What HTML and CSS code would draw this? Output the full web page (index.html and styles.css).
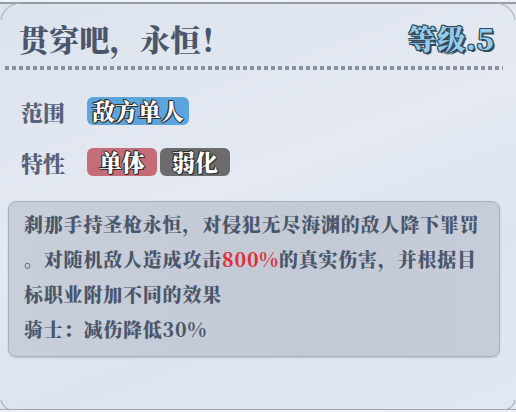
FILE: index.html
```html
<!doctype html>
<html lang="zh-CN">
    <head>
        <meta charset="UTF-8" />
        <title>技能详情</title>
        <link rel="stylesheet" href="styles.css">
    </head>

    <body>
        <div class="panel">
            <svg class="corner corner-tl" width="24" height="24" viewBox="0 0 24 24">
                <path d="M1 20 C2 12 7 6 18 3" fill="none" stroke="#b0b6bf" stroke-width="1.2" />
                <path d="M4 11 C6 8 9 6 13 4" fill="none" stroke="#c8cdd4" stroke-width="1" />
            </svg>
            <svg class="corner corner-tr" width="24" height="24" viewBox="0 0 24 24">
                <path d="M23 20 C22 12 17 6 6 3" fill="none" stroke="#b0b6bf" stroke-width="1.2" />
                <path d="M20 11 C18 8 15 6 11 4" fill="none" stroke="#c8cdd4" stroke-width="1" />
            </svg>
            <svg class="corner corner-bl" width="16" height="16" viewBox="0 0 16 16">
                <path d="M1 4 C2 9 5 12 10 14" fill="none" stroke="#a9afb9" stroke-width="1.2" />
            </svg>
            <svg class="corner corner-br" width="16" height="16" viewBox="0 0 16 16">
                <path d="M15 4 C14 9 11 12 6 14" fill="none" stroke="#a9afb9" stroke-width="1.2" />
            </svg>

            <div class="header">
                <h1 class="skill-name">贯穿吧，永恒！</h1>
                <div class="skill-level">等级.5</div>
            </div>
            <div class="dots"></div>

            <div class="attrs">
                <div class="attr-row">
                    <span class="attr-label">范围</span>
                    <span class="tag tag-blue">敌方单人</span>
                </div>
                <div class="attr-row">
                    <span class="attr-label">特性</span>
                    <span class="tag tag-red">单体</span>
                    <span class="tag tag-gray">弱化</span>
                </div>
            </div>

            <div class="desc">
                <p>刹那手持圣枪永恒，对侵犯无尽海渊的敌人降下罪罚</p>
                <p>。对随机敌人造成攻击<span class="hl">800%</span>的真实伤害，并根据目</p>
                <p>标职业附加不同的效果</p>
                <p>骑士：减伤降低30%</p>
            </div>
        </div>
    </body>
</html>
```

FILE: styles.css
```css
* {
    box-sizing: border-box;
    margin: 0;
    padding: 0;
}

body {
    width: 516px;
    height: 412px;
    background: #dfe5ee;
    font-family: "Noto Serif CJK SC", "Noto Sans CJK SC", serif;
    color: #4a566a;
    overflow: hidden;
}

.panel {
    position: relative;
    width: 516px;
    height: 412px;
    padding-top: 22px;
    background: linear-gradient(160deg, #dde3ed 0%, #e4e9f2 45%, #dde4ee 70%, #e2e8f1 100%);
    box-shadow:
        inset 0 2px 0 #eef1f6,
        inset 0 4px 0 #959ca7,
        inset 0 -2px 0 #eef1f6,
        inset 0 -3px 0 #a0a6b0;
}

.corner {
    position: absolute;
}

.corner-tl {
    top: 0;
    left: 0;
}

.corner-tr {
    top: 0;
    right: 0;
}

.corner-bl {
    bottom: 0;
    left: 0;
}

.corner-br {
    bottom: 0;
    right: 0;
}

.header {
    display: flex;
    justify-content: space-between;
    align-items: center;
    height: 32px;
    padding: 0 21px 0 19px;
}

.skill-name {
    font-size: 30px;
    font-weight: 900;
    line-height: 32px;
    letter-spacing: 0.3px;
}

.skill-level {
    font-size: 28px;
    font-weight: 900;
    line-height: 32px;
    letter-spacing: 1px;
    color: #93cdee;
    text-shadow:
        1px 0 0 #34495a,
        -1px 0 0 #34495a,
        0 1px 0 #34495a,
        0 -1px 0 #34495a,
        1px 1px 0 #34495a,
        -1px -1px 0 #34495a,
        1px -1px 0 #34495a,
        -1px 1px 0 #34495a,
        2px 2px 0 #34495a;
}

.dots {
    height: 4px;
    margin: 12px 13px 0 5px;
    background: repeating-linear-gradient(90deg, #8b919c 0 4px, transparent 4px 7px);
}

.attrs {
    display: flex;
    flex-direction: column;
    gap: 23px;
    margin-top: 27px;
    padding-left: 21px;
}

.attr-row {
    display: flex;
    align-items: center;
    gap: 3px;
    height: 28px;
}

.attr-label {
    width: 63px;
    font-size: 22px;
    font-weight: 900;
    color: #56627a;
}

.tag {
    height: 28px;
    border-radius: 6px;
    font-size: 23px;
    font-weight: 900;
    line-height: 28px;
    color: #ffffff;
    text-shadow:
        1px 0 0 #2d2d2d,
        -1px 0 0 #2d2d2d,
        0 1px 0 #2d2d2d,
        0 -1px 0 #2d2d2d,
        1px 1px 0 #2d2d2d,
        -1px -1px 0 #2d2d2d;
}

.tag-blue {
    background: #5ba4dc;
    padding: 0 5px;
}

.tag-red {
    background: #c46d79;
    padding: 0 12px;
}

.tag-gray {
    background: #6c6c6e;
    padding: 0 12px;
}

.desc {
    height: 156px;
    margin: 25px 16px 0 8px;
    padding: 4px 8px 0 15px;
    border: 1px solid #a9b0bc;
    border-radius: 8px;
    background: linear-gradient(90deg, #c8cfda 0%, #c3cad6 60%, #c6cdd8 100%);
    box-shadow: 0 1px 2px rgba(90, 100, 120, 0.25);
}

.desc p {
    font-size: 19px;
    font-weight: 900;
    line-height: 35px;
    letter-spacing: 0.8px;
    white-space: nowrap;
}

.hl {
    color: #e0303a;
}
```
